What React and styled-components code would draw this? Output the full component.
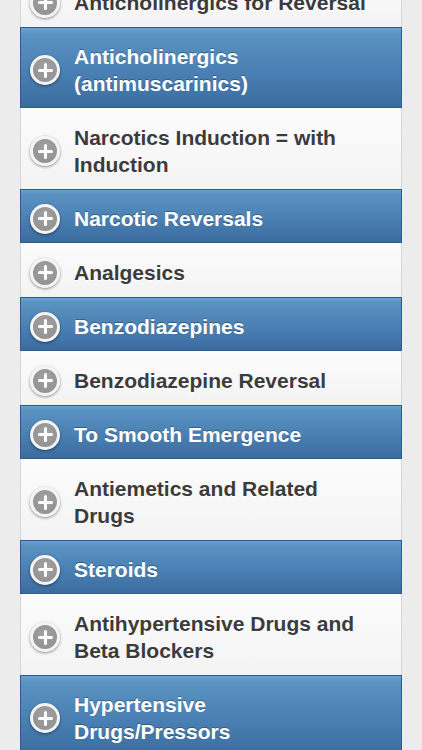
import React from "react";
import styled, { createGlobalStyle } from "styled-components";

const Global = createGlobalStyle`
  html, body { margin: 0; padding: 0; background: #ececec; overflow: hidden; }
  body { font-family: "Liberation Sans", Arial, sans-serif; }
`;

const Page = styled.div`
  width: 422px;
  height: 750px;
  overflow: hidden;
  background: #ececec;
  padding: 0 20px;
  box-sizing: border-box;
`;

const List = styled.ul`
  list-style: none;
  margin: -27px 0 0 0;
  padding: 0;
  display: flex;
  flex-direction: column;
`;

const Row = styled.li`
  display: flex;
  align-items: center;
  gap: 14px;
  box-sizing: border-box;
  padding: 16px 16px 11px 9px;
  font-size: 21px;
  line-height: 27px;
  font-weight: bold;
  ${(p) =>
    p.$blue
      ? `
    background: linear-gradient(to bottom, #6aa3cf 0%, #5a93c2 8%, #4a80b3 55%, #3b6c9f 100%);
    color: #ffffff;
    border: 1px solid #2f5c89;
    text-shadow: 0 -1px 0 rgba(0,0,0,0.3);
    padding-top: 15px;
    padding-bottom: 10px;
  `
      : `
    background: linear-gradient(to bottom, #fcfcfc 0%, #f3f3f3 100%);
    color: #3b3b3b;
    border-left: 1px solid #d6d6d6;
    border-right: 1px solid #d6d6d6;
    text-shadow: 0 1px 0 #ffffff;
  `}
`;

const Icon = styled.span`
  flex: 0 0 auto;
  width: 24px;
  height: 24px;
  margin: -2px 0;
  border-radius: 50%;
  border: 3px solid #f4f4f4;
  background: radial-gradient(circle at 50% 40%, #a2a2a2 0%, #8e8e8e 100%);
  box-shadow: 0 1px 3px rgba(0, 0, 0, 0.45);
  display: flex;
  align-items: center;
  justify-content: center;
`;

const Label = styled.span`
  flex: 1;
`;

const Plus = () => (
  <svg width="15" height="15" viewBox="0 0 15 15">
    <path d="M7.5 1.5v12M1.5 7.5h12" stroke="#ffffff" strokeWidth="3" strokeLinecap="round" />
  </svg>
);

const items = [
  { t: "Anticholinergics for Reversal", b: false },
  { t: "Anticholinergics (antimuscarinics)", b: true, br: ["Anticholinergics", "(antimuscarinics)"] },
  { t: "Narcotics Induction = with Induction", b: false, br: ["Narcotics Induction = with", "Induction"] },
  { t: "Narcotic Reversals", b: true },
  { t: "Analgesics", b: false },
  { t: "Benzodiazepines", b: true },
  { t: "Benzodiazepine Reversal", b: false },
  { t: "To Smooth Emergence", b: true },
  { t: "Antiemetics and Related Drugs", b: false, br: ["Antiemetics and Related", "Drugs"] },
  { t: "Steroids", b: true },
  { t: "Antihypertensive Drugs and Beta Blockers", b: false, br: ["Antihypertensive Drugs and", "Beta Blockers"] },
  { t: "Hypertensive Drugs/Pressors", b: true, br: ["Hypertensive", "Drugs/Pressors"] },
];

export default function App() {
  return (
    <Page>
      <Global />
      <List>
        {items.map((it, i) => (
          <Row key={i} $blue={it.b}>
            <Icon>
              <Plus />
            </Icon>
            <Label>
              {it.br ? (
                <>
                  {it.br[0]}
                  <br />
                  {it.br[1]}
                </>
              ) : (
                it.t
              )}
            </Label>
          </Row>
        ))}
      </List>
    </Page>
  );
}
